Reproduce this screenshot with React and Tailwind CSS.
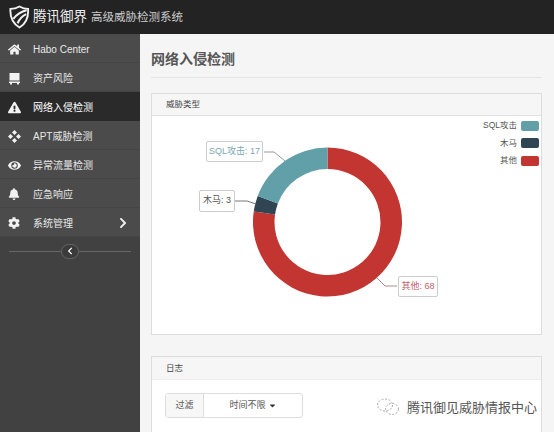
import React from "react";
import {
  FaHome,
  FaExclamationTriangle,
  FaEye,
  FaBell,
  FaCog,
  FaChevronRight,
  FaChevronLeft,
  FaCaretDown,
} from "react-icons/fa";

function AssetIcon() {
  return (
    <svg width="13" height="13" viewBox="0 0 13 13" fill="#f2f2f2">
      <rect x="1.5" y="1" width="10" height="7.5" />
      <rect x="1" y="9.5" width="11" height="1.5" />
      <rect x="2" y="11" width="2" height="1.5" />
      <rect x="9" y="11" width="2" height="1.5" />
    </svg>
  );
}

function MoveIcon() {
  return (
    <svg width="13" height="13" viewBox="0 0 13 13" fill="#f2f2f2">
      <path d="M6.5 0 9 2.5 6.5 5 4 2.5Z" />
      <path d="M6.5 8 9 10.5 6.5 13 4 10.5Z" />
      <path d="M2.5 4 5 6.5 2.5 9 0 6.5Z" />
      <path d="M10.5 4 13 6.5 10.5 9 8 6.5Z" />
    </svg>
  );
}

function ShieldLogo() {
  return (
    <svg width="21" height="24" viewBox="0 0 22 25" fill="none" stroke="#f2f2f2">
      <path d="M11 1.5C7.5 3.5 4.5 4 1.5 4c-.5 8 1.5 15 9.500 19.500C18.500 19 20.500 12 20 4c-3 0-5.500-.5-9-2.500Z" strokeWidth="2" />
      <path d="M4.500 14.500C8 10 12 7 18.500 5.500" strokeWidth="2.200" />
      <path d="M9 19C11 14.500 14 11.500 18 9.500" strokeWidth="2.200" />
    </svg>
  );
}

const navItems = [
  { label: "Habo Center", icon: <FaHome size={13} /> },
  { label: "资产风险", icon: <AssetIcon /> },
  { label: "网络入侵检测", icon: <FaExclamationTriangle size={13} />, active: true },
  { label: "APT威胁检测", icon: <MoveIcon /> },
  { label: "异常流量检测", icon: <FaEye size={13} /> },
  { label: "应急响应", icon: <FaBell size={12} /> },
  { label: "系统管理", icon: <FaCog size={12} />, arrow: true },
];

// ring segment, angles clockwise from 12 o'clock
function arcPath(cx, cy, r0, r1, a0, a1) {
  const pt = (r, a) => {
    const rad = ((a - 90) * Math.PI) / 180;
    return `${(cx + r * Math.cos(rad)).toFixed(2)} ${(cy + r * Math.sin(rad)).toFixed(2)}`;
  };
  const large = a1 - a0 > 180 ? 1 : 0;
  return `M${pt(r1, a0)}A${r1} ${r1} 0 ${large} 1 ${pt(r1, a1)}L${pt(r0, a1)}A${r0} ${r0} 0 ${large} 0 ${pt(r0, a0)}Z`;
}

function Donut() {
  // chart area origin sits at (152,116) of the page
  const cx = 175.5;
  const cy = 106;
  return (
    <svg width="390" height="219" viewBox="0 0 390 219" className="absolute left-0 top-0">
      <path d={arcPath(cx, cy, 53, 74.500, 0, 278.200)} fill="#c23531" />
      <path d={arcPath(cx, cy, 53, 74.500, 278.200, 290.500)} fill="#2f4554" />
      <path d={arcPath(cx, cy, 53, 74.500, 290.500, 360)} fill="#61a0a8" />
      <path d="M112 36H122L133 45" fill="none" stroke="#999" />
      <path d="M83 85H95L104 88" fill="none" stroke="#777" />
      <path d="M225 162 233 170H245" fill="none" stroke="#aa8a88" />
    </svg>
  );
}

function ChartLabel({ className, children }) {
  return (
    <div className={`absolute flex items-center justify-center whitespace-nowrap rounded-[2px] border border-[#ccc] bg-white text-[9px] ${className}`}>
      {children}
    </div>
  );
}

function LegendRow({ label, color }) {
  return (
    <div className="flex h-[17.500px] items-center justify-end gap-[4px] text-[8.500px] text-[#555]">
      <span>{label}</span>
      <span className={`h-[10px] w-[18px] rounded-[2px] ${color}`}></span>
    </div>
  );
}

export default function App() {
  return (
    <div className="relative flex h-[432px] w-[554px] flex-col overflow-hidden bg-[#f5f5f5] font-['Liberation_Sans','Noto_Sans_CJK_SC',sans-serif]">
      <header className="flex h-[34px] shrink-0 items-center bg-[#232323] pl-[9px] text-[#eee]">
        <ShieldLogo />
        <span className="ml-[3px] text-[13.500px]">腾讯御界</span>
        <span className="ml-[4px] mt-[2px] text-[11.500px] text-[#ccc]">高级威胁检测系统</span>
      </header>

      <div className="flex min-h-0 flex-1">
        <aside className="w-[140px] shrink-0 bg-[#414141]">
          <nav className="bg-[#4b4b4b]">
            {navItems.map((item) => (
              <div
                key={item.label}
                className={`flex h-[29px] items-center border-b pl-[8px] pr-[11px] pt-[2px] text-[10px] text-[#e8e8e8] ${
                  item.active ? "border-[#2a2a2a] bg-[#2a2a2a] text-white" : "border-[#444]"
                }`}
              >
                <span className="flex w-[25px] text-[#f2f2f2]">{item.icon}</span>
                <span className="flex-1">{item.label}</span>
                {item.arrow && <FaChevronRight size={12} className="text-[#eee]" />}
              </div>
            ))}
          </nav>
          <div className="flex h-[28px] items-center px-[9px]">
            <div className="h-px flex-1 bg-[#666]"></div>
            <div className="flex h-[15px] w-[18px] items-center justify-center rounded-full border border-[#666] bg-[#3b3b3b] text-white">
              <FaChevronLeft size={8} />
            </div>
            <div className="h-px flex-1 bg-[#666]"></div>
          </div>
        </aside>

        <main className="min-w-0 flex-1 pl-[11px] pr-[12px]">
          <div className="flex h-[44px] items-end border-b border-[#e4e4e4] pb-[7px]">
            <h1 className="text-[14px] font-bold leading-[22px] text-[#555]">网络入侵检测</h1>
          </div>

          <section className="mt-[15px] h-[242px] border border-[#ddd] bg-white">
            <div className="flex h-[22px] items-center border-b border-[#e2e2e2] bg-[#f6f6f6] pl-[14px] text-[8.500px] text-[#444]">
              威胁类型
            </div>
            <div className="relative h-[219px]">
              <Donut />
              <div className="absolute right-[2px] top-[1px]">
                <LegendRow label="SQL攻击" color="bg-[#61a0a8]" />
                <LegendRow label="木马" color="bg-[#2f4554]" />
                <LegendRow label="其他" color="bg-[#c23531]" />
              </div>
              <ChartLabel className="left-[54px] top-[25px] h-[21px] w-[57px] border-[#b7d0d3] text-[#7aa9af]">SQL攻击: 17</ChartLabel>
              <ChartLabel className="left-[47px] top-[74px] h-[22px] w-[36px] text-[#555]">木马: 3</ChartLabel>
              <ChartLabel className="left-[246px] top-[160px] h-[21px] w-[40px] text-[#c0606a]">其他: 68</ChartLabel>
            </div>
          </section>

          <section className="mt-[21px] border border-[#ddd] bg-white">
            <div className="flex h-[23px] items-center border-b border-[#eee] bg-[#f6f6f6] pl-[14px] text-[8.500px] text-[#444]">
              日志
            </div>
            <div className="px-[13px] pt-[13px] pb-[20px]">
              <div className="flex h-[25px] w-[138px] items-center rounded-[3px] border border-[#ddd] text-[9px] text-[#555]">
                <div className="flex h-full w-[38px] items-center justify-center border-r border-[#ddd] bg-[#f7f7f7]">过滤</div>
                <div className="flex flex-1 items-center justify-center gap-[2px]">
                  时间不限
                  <FaCaretDown size={9} className="text-[#333]" />
                </div>
              </div>
            </div>
          </section>
        </main>
      </div>

      {/* WeChat watermark, over the page */}
      <div className="absolute bottom-[15px] right-[17px] flex items-center gap-[7px] text-[13px] text-[#555] [text-shadow:0_0_2px_#fff]">
        <svg width="24" height="18" viewBox="0 0 24 18" fill="none" stroke="#aaa" strokeDasharray="2 1.500">
          <ellipse cx="9" cy="7" rx="7.500" ry="6" />
          <ellipse cx="16" cy="11" rx="6.500" ry="5.500" />
        </svg>
        <span>腾讯御见威胁情报中心</span>
      </div>
    </div>
  );
}
